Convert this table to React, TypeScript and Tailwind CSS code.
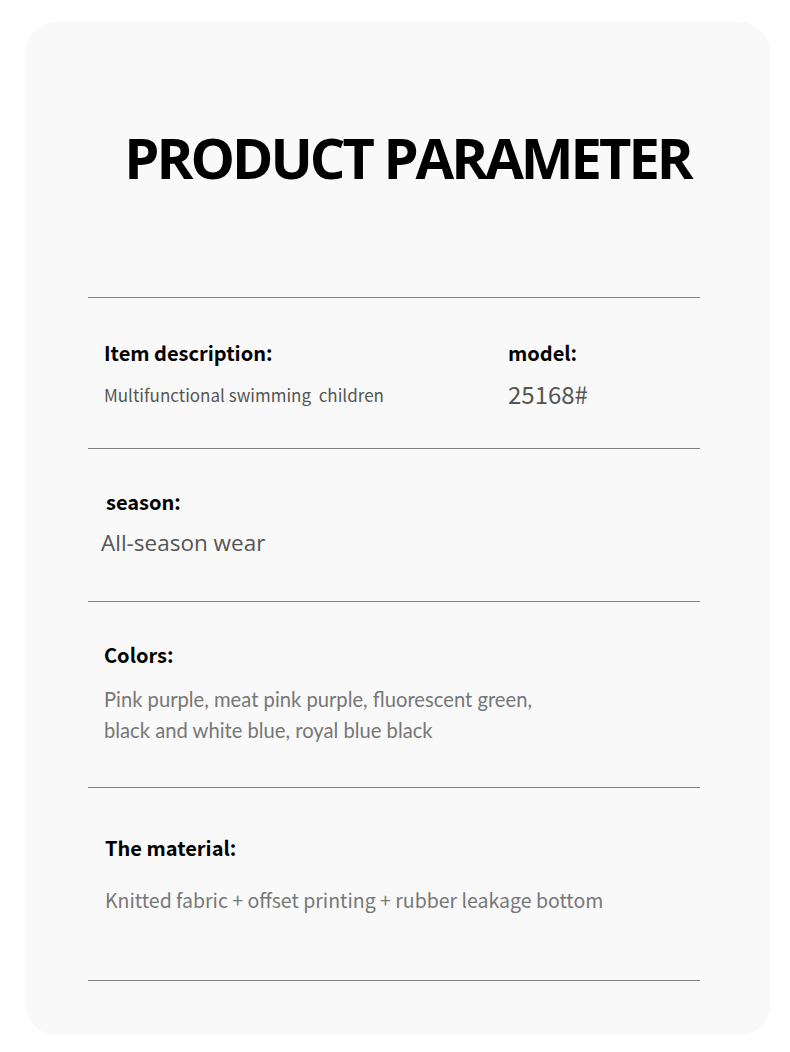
const cjk = "font-['Noto_Sans_CJK_SC','Noto_Sans',sans-serif]";
const ui = "font-['Open_Sans','Noto_Sans',sans-serif]";
const lato = "font-['Lato','Open_Sans',sans-serif]";

function Label({ children, className = "" }: { children: React.ReactNode; className?: string }) {
  return <div className={`${cjk} text-[20px] font-bold leading-[26px] text-black ${className}`}>{children}</div>;
}

export default function App() {
  return (
    <div className="w-[790px] h-[1052px] bg-white pt-[22px]">
      <div className="ml-[26px] w-[744px] h-[1013px] rounded-[30px] bg-[#f9f9f9]">
        {/* Title */}
        <div className="pt-[95px] pl-[19px] h-[275px]">
          <h1 className="text-center font-['Open_Sans',sans-serif] text-[56px] font-bold leading-[80px] tracking-[-3px] text-black">
            PRODUCT PARAMETER
          </h1>
        </div>

        <div className="ml-[62px] w-[612px]">
          {/* Item description / model */}
          <section className="h-[151px] border-t border-[#808080] pt-[42px] flex">
            <div className="w-[420px] pl-[16px]">
              <Label>Item description:</Label>
              <div className={`${cjk} mt-[17px] text-[17px] leading-[24px] text-[#555]`}>
                Multifunctional swimming&nbsp; children
              </div>
            </div>
            <div>
              <Label>model:</Label>
              <div className={`${cjk} mt-[14px] text-[24px] leading-[28px] text-[#555]`}>25168#</div>
            </div>
          </section>

          {/* season */}
          <section className="h-[153px] border-t border-[#808080] pt-[40px]">
            <Label className="pl-[18px]">season:</Label>
            <div className={`${ui} mt-[13px] pl-[13px] text-[22.5px] leading-[30px] text-[#555]`}>All-season wear</div>
          </section>

          {/* Colors */}
          <section className="h-[186px] border-t border-[#808080] pt-[40px] pl-[16px]">
            <Label>Colors:</Label>
            <div className={`${lato} mt-[16px] text-[20.2px] leading-[31px] text-[#777]`}>
              Pink purple, meat pink purple, fluorescent green,
              <br />
              black and white blue, royal blue black
            </div>
          </section>

          {/* material */}
          <section className="h-[194px] border-t border-b border-[#808080] pt-[47px] pl-[17px]">
            <Label>The material:</Label>
            <div className={`${cjk} mt-[25px] text-[19.5px] leading-[28px] text-[#777]`}>
              Knitted fabric + offset printing + rubber leakage bottom
            </div>
          </section>
        </div>
      </div>
    </div>
  );
}
